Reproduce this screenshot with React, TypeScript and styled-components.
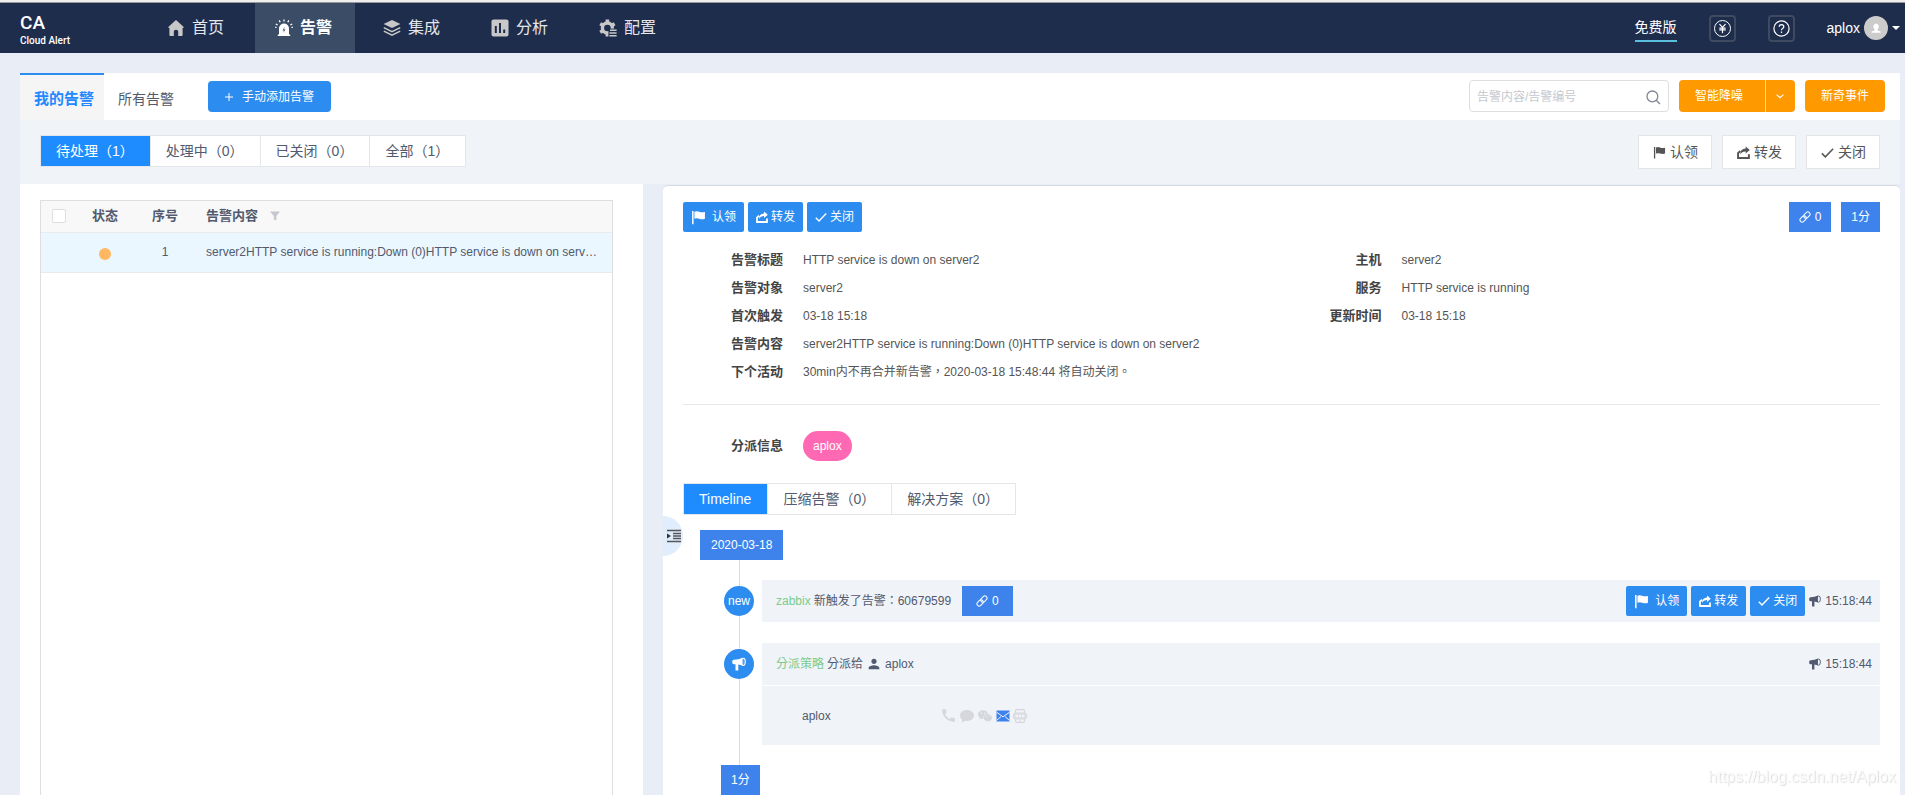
import React from 'react';
import styled, { createGlobalStyle, css } from 'styled-components';
import { JapaneseYen } from 'lucide-react';
import { MdCall, MdPerson } from 'react-icons/md';
import { AiFillWechat } from 'react-icons/ai';

const GlobalStyle = createGlobalStyle`
  *, *::before, *::after { box-sizing: border-box; }
  body {
    margin: 0;
    font-family: "Liberation Sans", "Noto Sans CJK SC", sans-serif;
    font-size: 12px;
    line-height: 18px;
    color: #515a6e;
    background: #e9edf5;
  }
  button, input { font-family: inherit; font-size: inherit; line-height: inherit; margin: 0; }
  button { cursor: pointer; }
  a { color: inherit; text-decoration: none; }
  svg { display: block; flex: none; }
`;

/* ---------- icons ---------- */

type IconProps = { size?: number };

const HomeIcon = ({ size = 18 }: IconProps) => (
  <svg width={size} height={size} viewBox="0 0 18 18" fill="currentColor">
    <path d="M9 1 L17 8.2 L15.6 9 V16 Q15.6 17 14.6 17 H11.2 V12.6 Q11.2 10.8 9 10.8 T6.8 12.6 V17 H3.4 Q2.4 17 2.4 16 V9 L1 8.2 Z" />
  </svg>
);

const AlarmIcon = ({ size = 18 }: IconProps) => (
  <svg width={size} height={size} viewBox="0 0 18 18" fill="none">
    <path d="M4 15.6 V9.6 A5 5 0 0 1 14 9.6 V15.6 H15.2 V17 H2.8 V15.6 Z" fill="currentColor" />
    <path d="M9.8 7.6 L7.6 11.4 H9 L8.2 14 L10.4 10.4 H9 Z" fill="#3b4d66" />
    <path d="M9 0.4 V2.4 M4.2 1.4 L5.2 3.2 M13.8 1.4 L12.8 3.2 M0.8 5 L2.6 6 M17.2 5 L15.4 6 M0.2 8.4 H1.6 M17.8 8.4 H16.4" stroke="currentColor" strokeWidth="1.3" />
  </svg>
);

const LayersIcon = ({ size = 18 }: IconProps) => (
  <svg width={size} height={size} viewBox="0 0 18 18" fill="none">
    <path d="M9 1 L17.4 5 L9 9 L0.6 5 Z" fill="currentColor" />
    <path d="M0.8 8.6 L9 12.6 L17.2 8.6 M0.8 12.2 L9 16.2 L17.2 12.2" stroke="currentColor" strokeWidth="1.5" />
  </svg>
);

const ChartIcon = ({ size = 18 }: IconProps) => (
  <svg width={size} height={size} viewBox="0 0 18 18">
    <rect x="0.5" y="0.5" width="17" height="17" rx="2" fill="currentColor" />
    <path d="M4.8 7 V14 M9 4 V14 M13.2 10.4 V14" stroke="#1f2d4d" strokeWidth="2" />
  </svg>
);

const GearListIcon = ({ size = 18 }: IconProps) => (
  <svg width={size} height={size} viewBox="0 0 18 18" fill="none">
    <circle cx="8.4" cy="9" r="5" stroke="currentColor" strokeWidth="3.4" />
    <path d="M8.4 0.6 V4 M8.4 14 V17.4 M1.2 4.8 L4 6.4 M1.2 13.2 L4 11.6 M15.6 4.8 L12.8 6.4" stroke="currentColor" strokeWidth="3.6" />
    <path d="M9.4 9.6 H18 V18 H9.4 Z" fill="#1f2d4d" />
    <path d="M11 11.2 H17.6 M10.4 14 H17.6 M10.4 16.8 H17.6" stroke="currentColor" strokeWidth="1.4" />
  </svg>
);

const FlagIcon = ({ size = 14 }: IconProps) => (
  <svg width={size} height={size} viewBox="0 0 14 14" fill="currentColor">
    <path d="M1 1 H2.4 V13.4 H1 Z M3.2 1.6 Q5.4 0.6 7.6 1.6 T13 1.8 V8.2 Q10.4 9.2 7.8 8.2 T3.2 8.2 Z" />
  </svg>
);

const ShareIcon = ({ size = 12 }: IconProps) => (
  <svg width={size} height={size} viewBox="0 0 12 12" fill="none">
    <path d="M8 0.4 L11.8 3.8 L8 7 V5 Q4.6 4.8 3 7.8 Q3 2.6 8 2.4 Z" fill="currentColor" />
    <path d="M3 4.6 L1 6.6 V11 H11 V7.6" stroke="currentColor" strokeWidth="1.8" />
  </svg>
);

const CheckIcon = ({ size = 12 }: IconProps) => (
  <svg width={size} height={size} viewBox="0 0 12 12" fill="none">
    <path d="M0.8 6.8 L4 10 L11.2 2.6" stroke="currentColor" strokeWidth="1.4" />
  </svg>
);

const LinkIcon = ({ size = 12 }: IconProps) => (
  <svg width={size} height={size} viewBox="0 0 12 12" fill="none" stroke="currentColor">
    <g transform="rotate(-45 6 6)" strokeWidth="1">
      <rect x="-0.2" y="3.8" width="7" height="4.4" rx="2.2" />
      <rect x="5.2" y="3.8" width="7" height="4.4" rx="2.2" />
    </g>
  </svg>
);

const HornIcon = ({ size = 12 }: IconProps) => (
  <svg width={size} height={size} viewBox="0 0 12 12" fill="none">
    <path d="M0.2 3.6 Q0.2 2.4 1.6 2.3 Q6 2.2 9 0.6 V7.6 Q7.4 6.6 5.4 6.4 V11.6 H3 V6.3 H1.6 Q0.2 6.2 0.2 5 Z" fill="currentColor" />
    <ellipse cx="9.7" cy="4.1" rx="1.7" ry="3.1" fill="#dfe4ec" fillOpacity="0.25" stroke="currentColor" strokeWidth="0.9" />
  </svg>
);

const FilterIcon = () => (
  <svg width="10" height="10" viewBox="0 0 10 10" fill="#c5c8ce">
    <path d="M0 0.6 H10 L6.4 5 V9.6 L3.8 8.4 V5 Z" />
  </svg>
);

const SearchIcon = () => (
  <svg width="16" height="16" viewBox="0 0 16 16" fill="none" stroke="#808695" strokeWidth="1.3">
    <circle cx="7.4" cy="7.4" r="5.4" />
    <path d="M11.2 11.2 L15 15" />
  </svg>
);

const ChevronIcon = () => (
  <svg width="10" height="10" viewBox="0 0 10 10" fill="none" stroke="currentColor" strokeWidth="1.2">
    <path d="M1.6 3.6 L5 6.8 L8.4 3.6" />
  </svg>
);

const PlusIcon = () => (
  <svg width="8" height="8" viewBox="0 0 8 8" fill="none" stroke="currentColor">
    <path d="M4 0 V8 M0 4 H8" />
  </svg>
);

const QuestionIcon = () => (
  <svg width="17" height="17" viewBox="0 0 17 17" fill="none" stroke="currentColor" strokeWidth="1.2">
    <circle cx="8.5" cy="8.5" r="7.6" />
    <path d="M6.2 6.8 Q6.2 4.6 8.5 4.6 T10.8 6.8 Q10.8 7.8 9.6 8.5 T8.5 10.3 M8.5 11.5 V12.9" />
  </svg>
);

const AvatarIcon = () => (
  <svg width="24" height="24" viewBox="0 0 24 24">
    <circle cx="12" cy="12" r="12" fill="#ccc" />
    <path d="M12 7.4 a3 3.2 0 0 1 1.6 5.8 v1.2 L16.6 15.6 V16.8 H7.6 V15.6 L10.6 14.4 V13.2 A3 3.2 0 0 1 12 7.4 Z" fill="#fff" />
  </svg>
);

const CaretIcon = () => (
  <svg width="8" height="4" viewBox="0 0 8 4" fill="#fff">
    <path d="M0 0 H8 L4 4 Z" />
  </svg>
);

const CollapseIcon = () => (
  <svg width="14" height="14" viewBox="0 0 14 14" fill="none">
    <path d="M0 1.5 H14 M6 4.5 H14 M6 7 H14 M6 9.5 H14 M0 12.5 H14" stroke="#555" strokeWidth="1.4" />
    <path d="M0 4.4 L4 7 L0 9.6 Z" fill="#333" />
  </svg>
);

const BubbleIcon = () => (
  <svg width="14" height="14" viewBox="0 0 14 14" fill="currentColor">
    <path d="M7 1 C11 1 14 3.4 14 6.6 S11 12 7 12 Q5.8 12 4.8 11.8 Q3.6 13.2 1.8 13.6 Q2.4 12.4 2 10.8 Q0 9 0 6.6 C0 3.4 3 1 7 1 Z" />
  </svg>
);

const MailIcon = () => (
  <svg width="14" height="12" viewBox="0 0 14 12">
    <rect x="0.5" y="0.5" width="13" height="11" fill="#3e83ec" />
    <path d="M0.5 2.2 L7 6.8 L13.5 2.2 M0.5 10.4 L5 6.6 M13.5 10.4 L9 6.6" stroke="#f0f3f8" strokeWidth="1" fill="none" />
  </svg>
);

const AppIcon = () => (
  <svg width="14" height="14" viewBox="0 0 14 14" fill="none" stroke="currentColor">
    <path d="M2.5 4 V2 Q2.5 0.6 3.8 0.6 H10.2 Q11.5 0.6 11.5 2 V4 M2.5 10 V12 Q2.5 13.4 3.8 13.4 H10.2 Q11.5 13.4 11.5 12 V10 M6.4 11.6 H7.6" strokeWidth="1.2" />
    <rect x="0.5" y="4" width="13" height="6" rx="2" fill="currentColor" fillOpacity="0.6" />
    <path d="M3 7 H11" stroke="#f0f3f8" strokeDasharray="2 1" strokeWidth="2" />
  </svg>
);

/* ---------- frame ---------- */

const Page = styled.div`
  display: flex;
  flex-direction: column;
  height: 100vh;
  overflow: hidden;
`;

const Header = styled.header`
  display: flex;
  align-items: stretch;
  flex: none;
  height: 53px;
  background: #1f2d4d;
  border-top: 2px solid #efefef;
  box-shadow: inset 0 1px 0 #999;
  padding: 1px 5px 0 20px;
  color: #fff;
`;

const Logo = styled.div`
  display: flex;
  flex-direction: column;
  justify-content: center;
  width: 127px;
  padding-top: 4px;
  font-family: Roboto, sans-serif;
  font-weight: 500;
`;

const LogoMark = styled.span`
  font-size: 19px;
  line-height: 22px;
`;

const LogoName = styled.span`
  font-size: 10px;
  line-height: 14px;
`;

const Nav = styled.nav`
  display: flex;
  gap: 8px;
`;

const NavItem = styled.a<{ $active?: boolean }>`
  display: flex;
  align-items: center;
  gap: 7px;
  width: 100px;
  padding: 0 20px;
  font-size: 16px;
  color: #e4e6ea;
  svg { color: #c8c8c8; }
  ${(p) => p.$active && css`
    background: #3b4d66;
    color: #fff;
    font-weight: 700;
    svg { color: #fff; }
  `}
`;

const HeaderRight = styled.div`
  display: flex;
  align-items: center;
  gap: 32px;
  margin-left: auto;
`;

const Plan = styled.a`
  padding: 4px 0;
  border-bottom: 2px solid #5bc0de;
  font-size: 14px;
`;

const SquareButton = styled.button`
  display: grid;
  place-items: center;
  width: 27px;
  height: 27px;
  padding: 0;
  background: none;
  border: 2px solid #3f4960;
  border-radius: 4px;
  color: #fff;
`;

const Coin = styled.span`
  display: grid;
  place-items: center;
  width: 17px;
  height: 17px;
  border: 1px solid currentColor;
  border-radius: 50%;
`;

const UserMenu = styled.button`
  display: flex;
  align-items: center;
  gap: 4px;
  padding: 0;
  border: 0;
  background: none;
  color: #fff;
  font-size: 14px;
`;

const Main = styled.main`
  display: flex;
  flex-direction: column;
  flex: 1;
  min-height: 0;
  padding: 20px 5px 0 20px;
`;

const TopBar = styled.div`
  display: flex;
  flex: none;
  height: 47px;
  padding-right: 15px;
  background: #fff;
`;

const PageTab = styled.button<{ $active?: boolean }>`
  padding: 3px 14px 0;
  border: 0;
  border-top: 2px solid transparent;
  background: none;
  color: #515a6e;
  font-size: 14px;
  ${(p) => p.$active && css`
    padding: 3px 10px 0 14px;
    border-top-color: #2d8cf0;
    background: #f5f5f5;
    color: #2288ff;
    font-size: 15px;
    font-weight: 700;
  `}
`;

const AddButton = styled.button`
  display: flex;
  align-items: center;
  gap: 9px;
  height: 31px;
  margin: 8px 0 0 20px;
  padding: 0 17px;
  border: 0;
  border-radius: 4px;
  background: #2d8cf0;
  color: #fff;
`;

const TopActions = styled.div`
  display: flex;
  gap: 10px;
  height: 32px;
  margin: 7px 0 0 auto;
`;

const SearchBox = styled.label`
  display: flex;
  align-items: center;
  width: 200px;
  padding: 2px 7px 0;
  border: 1px solid #dddee1;
  border-radius: 4px;
`;

const SearchInput = styled.input`
  flex: 1;
  min-width: 0;
  padding: 0;
  border: 0;
  outline: 0;
  background: none;
  &::placeholder { color: #c5c8ce; opacity: 1; }
`;

const SplitButton = styled.div`
  display: flex;
`;

const OrangeButton = styled.button<{ $part?: 'start' | 'end' }>`
  padding: 0 16px;
  border: 0;
  border-radius: 4px;
  background: #ff9900;
  color: #fff;
  ${(p) => p.$part === 'start' && css`
    padding-right: 22px;
    border-radius: 4px 0 0 4px;
  `}
  ${(p) => p.$part === 'end' && css`
    padding: 0 10px 0 9px;
    border-left: 1px solid #ffdca6;
    border-radius: 0 4px 4px 0;
  `}
`;

const FilterBar = styled.div`
  display: flex;
  align-items: flex-start;
  justify-content: space-between;
  flex: none;
  height: 64px;
  padding: 15px 20px 0;
  background: #f0f3f8;
`;

const Segments = styled.div`
  display: inline-flex;
  height: 32px;
  border: 1px solid #e4e6ea;
  background: #fff;
`;

const Segment = styled.button<{ $active?: boolean }>`
  padding: 0 16px 0 15px;
  border: 0;
  background: ${(p) => (p.$active ? '#1e8cff' : '#fff')};
  color: ${(p) => (p.$active ? '#fff' : '#515a6e')};
  font-size: 14px;
  & + & { border-left: 1px solid #e4e6ea; }
`;

const BulkActions = styled.div`
  display: flex;
  gap: 10px;
`;

const BulkButton = styled.button`
  display: flex;
  align-items: center;
  gap: 4px;
  height: 34px;
  padding: 0 13px 0 14px;
  border: 1px solid #e6e6e6;
  background: #fff;
  color: #555;
  font-size: 14px;
`;

/* ---------- alert list ---------- */

const Columns = styled.div`
  display: grid;
  grid-template-columns: minmax(0, 623fr) minmax(0, 1237fr);
  gap: 20px;
  flex: 1;
  min-height: 0;
`;

const ListPanel = styled.section`
  display: flex;
  padding: 16px 30px 0 20px;
  background: #fff;
`;

const ListFrame = styled.div`
  flex: 1;
  min-width: 0;
  border: 1px solid #dcdee2;
  border-bottom: 0;
`;

const Table = styled.table`
  width: 100%;
  table-layout: fixed;
  border-collapse: collapse;
`;

const Th = styled.th<{ $left?: boolean }>`
  height: 31px;
  padding: ${(p) => (p.$left ? '0 0 0 11px' : '0')};
  border-bottom: 1px solid #e8eaec;
  background: #f8f8f9;
  font-size: 13px;
  text-align: ${(p) => (p.$left ? 'left' : 'center')};
`;

const ThContent = styled.div`
  display: flex;
  align-items: center;
  gap: 12px;
`;

const Td = styled.td<{ $left?: boolean }>`
  height: 40px;
  padding: ${(p) => (p.$left ? '0 14px 0 11px' : '0')};
  border-bottom: 1px solid #e8eaec;
  background: #ebf7ff;
  text-align: ${(p) => (p.$left ? 'left' : 'center')};
  overflow: hidden;
  text-overflow: ellipsis;
  white-space: nowrap;
`;

const Checkbox = styled.input`
  display: block;
  appearance: none;
  width: 14px;
  height: 14px;
  margin: 0;
  border: 1px solid #dcdee2;
  border-radius: 2px;
  background: #fff;
`;

const StatusDot = styled.span`
  display: block;
  width: 12px;
  height: 12px;
  margin: 3px auto 0;
  border-radius: 50%;
  background: #ffb761;
`;

/* ---------- alert detail ---------- */

const DetailPanel = styled.section`
  position: relative;
  min-height: 0;
  margin-top: 1px;
  padding: 16px 20px 0;
  border-top: 1px solid #d7dae0;
  border-radius: 5px 5px 0 0;
  background: #fff;
  overflow: hidden;
`;

const DetailHead = styled.div`
  display: flex;
  justify-content: space-between;
  height: 30px;
`;

const ActionRow = styled.div`
  display: flex;
  gap: 4px;
`;

const ActionButton = styled.button<{ $wide?: boolean }>`
  display: flex;
  align-items: center;
  gap: ${(p) => (p.$wide ? 6 : 3)}px;
  height: 30px;
  padding: 0 8px;
  border: 0;
  border-radius: 2px;
  background: #2d8cf0;
  color: #fff;
`;

const TagRow = styled.div`
  display: flex;
  gap: 10px;
`;

const Tag = styled.span<{ $wide?: boolean }>`
  display: inline-flex;
  align-items: center;
  gap: 4px;
  height: 30px;
  padding: 0 ${(p) => (p.$wide ? 14 : 10)}px;
  background: #3e83ec;
  color: #fff;
`;

const Facts = styled.dl`
  display: grid;
  grid-template-columns: repeat(2, minmax(0, 1fr));
  margin: 14px 0 0;
  padding-bottom: 18px;
  border-bottom: 1px solid #e8e8e8;
`;

const Fact = styled.div<{ $full?: boolean }>`
  display: grid;
  grid-template-columns: 100px minmax(0, 1fr);
  gap: 20px;
  align-items: center;
  height: 28px;
  ${(p) => p.$full && 'grid-column: 1 / -1;'}
`;

const FactLabel = styled.dt`
  color: #444;
  font-size: 13px;
  font-weight: 700;
  text-align: right;
`;

const FactValue = styled.dd`
  margin: 0;
  color: #555;
  font-family: "Liberation Sans", "Noto Sans CJK TC", sans-serif;
`;

const Assignment = styled.dl`
  margin: 0;
  padding: 26px 0 24px;
`;

const Pill = styled.span`
  display: inline-flex;
  align-items: center;
  height: 30px;
  padding: 0 10px;
  border-radius: 15px;
  background: #ff69b4;
  color: #fff;
`;

const CollapseButton = styled.button`
  position: absolute;
  left: 0;
  top: 330px;
  display: flex;
  align-items: center;
  width: 20px;
  height: 40px;
  padding: 0 0 0 4px;
  border: 0;
  border-radius: 0 20px 20px 0;
  background: #e0edfd;
`;

/* ---------- timeline ---------- */

const Timeline = styled.div`
  padding-top: 15px;
`;

const DateTag = styled(Tag)`
  margin-left: 17px;
  padding: 0 11px;
`;

const Events = styled.ol`
  display: flex;
  flex-direction: column;
  gap: 21px;
  margin: 0;
  padding: 20px 0 20px 41px;
  list-style: none;
  background: linear-gradient(#dcdcdc, #dcdcdc) 56px 0 / 1px 100% no-repeat;
`;

const Event = styled.li`
  display: flex;
  align-items: flex-start;
  gap: 8px;
`;

const Node = styled.span`
  display: grid;
  place-items: center;
  flex: none;
  width: 30px;
  height: 30px;
  margin-top: 6px;
  border-radius: 50%;
  background: #2d8cf0;
  color: #fff;
`;

const Card = styled.div`
  flex: 1;
  min-width: 0;
`;

const CardHead = styled.div`
  display: flex;
  align-items: center;
  gap: 11px;
  height: 42px;
  padding: 0 8px 0 14px;
  background: #f0f3f8;
`;

const CardBody = styled.div`
  display: flex;
  align-items: center;
  height: 59px;
  margin-top: 1px;
  padding: 0 40px;
  background: #f0f3f8;
`;

const EventText = styled.span`
  display: inline-flex;
  align-items: center;
  gap: 3px;
  font-family: "Liberation Sans", "Noto Sans CJK TC", sans-serif;
`;

const Source = styled.span`
  color: #7acb8c;
`;

const EventSide = styled.div`
  display: flex;
  align-items: center;
  gap: 4px;
  margin-left: auto;
`;

const Person = styled.span`
  width: 138px;
`;

const Channels = styled.div`
  display: flex;
  align-items: center;
  gap: 3px;
  color: #d5d7db;
`;

const TotalTag = styled(Tag)`
  margin-left: 38px;
`;

const Watermark = styled.div`
  position: fixed;
  right: 9px;
  bottom: 9px;
  font-size: 16px;
  color: #fafafa;
  text-shadow: 1px 1px 1px #ddd;
  pointer-events: none;
`;

const filters = ['待处理（1）', '处理中（0）', '已关闭（0）', '全部（1）'];
const detailTabs = ['Timeline', '压缩告警（0）', '解决方案（0）'];

const AlertActions = () => (
  <ActionRow>
    <ActionButton type="button" $wide><FlagIcon size={15} />认领</ActionButton>
    <ActionButton type="button"><ShareIcon />转发</ActionButton>
    <ActionButton type="button"><CheckIcon />关闭</ActionButton>
  </ActionRow>
);

export default function App() {
  return (
    <Page>
      <GlobalStyle />
      <Header>
        <Logo>
          <LogoMark>CA</LogoMark>
          <LogoName>Cloud Alert</LogoName>
        </Logo>
        <Nav>
          <NavItem href="#home"><HomeIcon />首页</NavItem>
          <NavItem href="#alerts" $active><AlarmIcon />告警</NavItem>
          <NavItem href="#integrations"><LayersIcon />集成</NavItem>
          <NavItem href="#analysis"><ChartIcon />分析</NavItem>
          <NavItem href="#settings"><GearListIcon />配置</NavItem>
        </Nav>
        <HeaderRight>
          <Plan href="#plan">免费版</Plan>
          <SquareButton type="button" aria-label="账单"><Coin><JapaneseYen size={11} strokeWidth={2.6} /></Coin></SquareButton>
          <SquareButton type="button" aria-label="帮助"><QuestionIcon /></SquareButton>
          <UserMenu type="button">aplox<AvatarIcon /><CaretIcon /></UserMenu>
        </HeaderRight>
      </Header>

      <Main>
        <TopBar>
          <PageTab type="button" $active>我的告警</PageTab>
          <PageTab type="button">所有告警</PageTab>
          <AddButton type="button"><PlusIcon />手动添加告警</AddButton>
          <TopActions>
            <SearchBox>
              <SearchInput type="text" aria-label="搜索告警" placeholder="告警内容/告警编号" />
              <SearchIcon />
            </SearchBox>
            <SplitButton>
              <OrangeButton type="button" $part="start">智能降噪</OrangeButton>
              <OrangeButton type="button" $part="end" aria-label="更多"><ChevronIcon /></OrangeButton>
            </SplitButton>
            <OrangeButton type="button">新奇事件</OrangeButton>
          </TopActions>
        </TopBar>

        <FilterBar>
          <Segments>
            {filters.map((label, i) => (
              <Segment key={label} type="button" $active={i === 0}>{label}</Segment>
            ))}
          </Segments>
          <BulkActions>
            <BulkButton type="button"><FlagIcon size={13} />认领</BulkButton>
            <BulkButton type="button"><ShareIcon size={13} />转发</BulkButton>
            <BulkButton type="button"><CheckIcon size={13} />关闭</BulkButton>
          </BulkActions>
        </FilterBar>

        <Columns>
          <ListPanel>
            <ListFrame>
              <Table>
                <colgroup>
                  <col width="34" />
                  <col width="60" />
                  <col width="60" />
                  <col />
                </colgroup>
                <thead>
                  <tr>
                    <Th $left><Checkbox type="checkbox" aria-label="全选" /></Th>
                    <Th>状态</Th>
                    <Th>序号</Th>
                    <Th $left><ThContent>告警内容<FilterIcon /></ThContent></Th>
                  </tr>
                </thead>
                <tbody>
                  <tr>
                    <Td />
                    <Td><StatusDot /></Td>
                    <Td>1</Td>
                    <Td $left>server2HTTP service is running:Down (0)HTTP service is down on server2</Td>
                  </tr>
                </tbody>
              </Table>
            </ListFrame>
          </ListPanel>

          <DetailPanel>
            <DetailHead>
              <AlertActions />
              <TagRow>
                <Tag><LinkIcon />0</Tag>
                <Tag>1分</Tag>
              </TagRow>
            </DetailHead>

            <Facts>
              <Fact><FactLabel>告警标题</FactLabel><FactValue>HTTP service is down on server2</FactValue></Fact>
              <Fact><FactLabel>主机</FactLabel><FactValue>server2</FactValue></Fact>
              <Fact><FactLabel>告警对象</FactLabel><FactValue>server2</FactValue></Fact>
              <Fact><FactLabel>服务</FactLabel><FactValue>HTTP service is running</FactValue></Fact>
              <Fact><FactLabel>首次触发</FactLabel><FactValue>03-18 15:18</FactValue></Fact>
              <Fact><FactLabel>更新时间</FactLabel><FactValue>03-18 15:18</FactValue></Fact>
              <Fact $full><FactLabel>告警内容</FactLabel><FactValue>server2HTTP service is running:Down (0)HTTP service is down on server2</FactValue></Fact>
              <Fact $full><FactLabel>下个活动</FactLabel><FactValue>30min内不再合并新告警，2020-03-18 15:48:44 将自动关闭。</FactValue></Fact>
            </Facts>

            <Assignment>
              <Fact><FactLabel>分派信息</FactLabel><FactValue><Pill>aplox</Pill></FactValue></Fact>
            </Assignment>

            <Segments>
              {detailTabs.map((label, i) => (
                <Segment key={label} type="button" $active={i === 0}>{label}</Segment>
              ))}
            </Segments>

            <Timeline>
              <DateTag>2020-03-18</DateTag>
              <Events>
                <Event>
                  <Node>new</Node>
                  <Card>
                    <CardHead>
                      <EventText><Source>zabbix</Source>新触发了告警：60679599</EventText>
                      <Tag $wide><LinkIcon />0</Tag>
                      <EventSide>
                        <AlertActions />
                        <HornIcon />15:18:44
                      </EventSide>
                    </CardHead>
                  </Card>
                </Event>
                <Event>
                  <Node><HornIcon size={14} /></Node>
                  <Card>
                    <CardHead>
                      <EventText><Source>分派策略</Source>分派给 <MdPerson size={16} />aplox</EventText>
                      <EventSide><HornIcon />15:18:44</EventSide>
                    </CardHead>
                    <CardBody>
                      <Person>aplox</Person>
                      <Channels>
                        <MdCall size={17} />
                        <BubbleIcon />
                        <AiFillWechat size={16} />
                        <MailIcon />
                        <AppIcon />
                      </Channels>
                    </CardBody>
                  </Card>
                </Event>
              </Events>
              <TotalTag>1分</TotalTag>
            </Timeline>

            <CollapseButton type="button" aria-label="收起"><CollapseIcon /></CollapseButton>
          </DetailPanel>
        </Columns>
      </Main>
      <Watermark>https://blog.csdn.net/Aplox</Watermark>
    </Page>
  );
}
